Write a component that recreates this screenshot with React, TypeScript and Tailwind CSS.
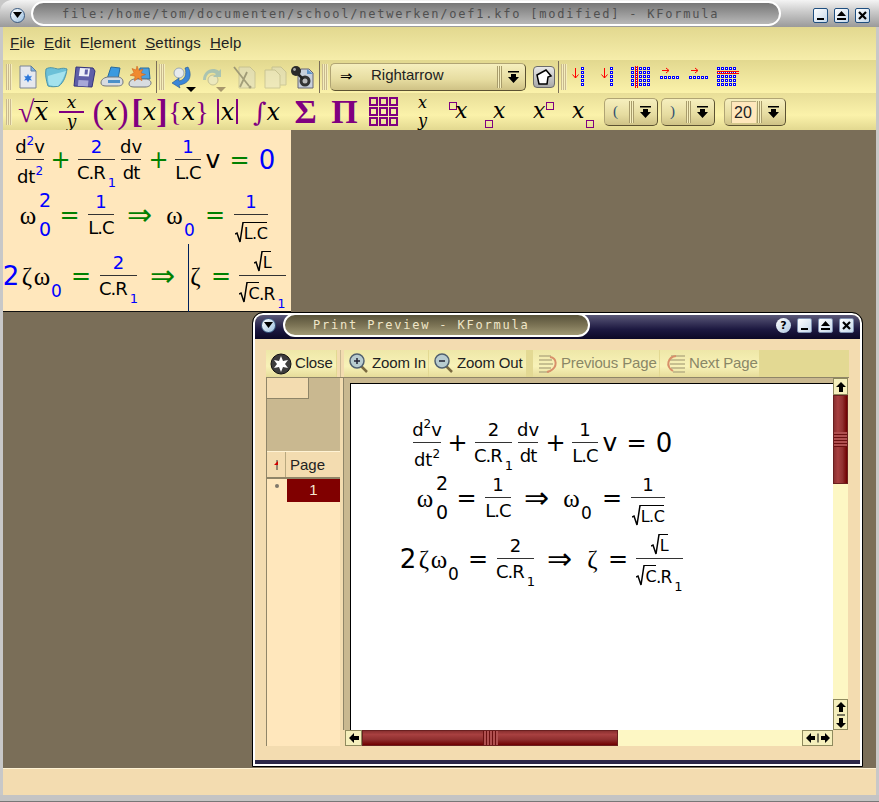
import type { ReactNode } from "react";

const SANS = "font-['DejaVu_Sans',sans-serif]";
const ARIAL = "font-['Liberation_Sans',sans-serif]";

// formula colours change between the editor and the print preview
type Ink = { num: string; op: string; txt: string; sub: string };
const EDIT: Ink = { num: "text-[#0000ff]", op: "text-[#008000]", txt: "text-black", sub: "text-[#0000ff]" };
const PRINT: Ink = { num: "text-black", op: "text-black", txt: "text-black", sub: "text-black" };

function Frac({ top, bottom, cls, tall }: { top: ReactNode; bottom: ReactNode; cls: string; tall?: boolean }) {
  const h = tall ? "h-[28px]" : "h-[26px]";
  return (
    <span className={`inline-flex flex-col items-center shrink-0 ${cls}`}>
      <span className={`${h} flex items-end justify-center leading-none whitespace-nowrap pb-[3px]`}>{top}</span>
      <span className="h-px w-full bg-[#333] shrink-0" />
      <span className={`${h} flex items-start justify-center leading-none whitespace-nowrap pt-[4px] tracking-[-1px]`}>{bottom}</span>
    </span>
  );
}

function Sub({ children, ink }: { children: ReactNode; ink: Ink }) {
  return <span className={`${ink.sub} relative inline-block text-[13px] top-[8px] ml-[3px] tracking-normal leading-none`}>{children}</span>;
}

function Sup({ children, ink }: { children: ReactNode; ink: Ink }) {
  return <span className={`${ink.sub} relative inline-block text-[12px] -top-[8px] leading-none tracking-normal`}>{children}</span>;
}

// zero-digit subscript next to an omega
function Idx({ cls, ink }: { cls: string; ink: Ink }) {
  return <span className={`${ink.sub} ${cls} relative top-[16px] text-[17px] leading-none shrink-0 flex justify-center`}>0</span>;
}

function Root({ children, cls = "text-[16px]" }: { children: ReactNode; cls?: string }) {
  return (
    <span className="inline-flex items-start">
      <svg width="9" height="21" viewBox="0 0 9 21" className="shrink-0">
        <path d="M0 12l2-1 3 9L8 .5h1" stroke="#000" strokeWidth="1.500" fill="none" />
      </svg>
      <span className={`border-t border-black pt-[3px] leading-none tracking-[-.5px] ${cls}`}>{children}</span>
    </span>
  );
}

function Op({ ink, cls, children }: { ink: Ink; cls: string; children: ReactNode }) {
  return <span className={`${ink.op} ${cls} text-[24px] leading-none shrink-0 flex justify-center`}>{children}</span>;
}

function Arrow({ ink, cls }: { ink: Ink; cls: string }) {
  return <span className={`${ink.op} ${cls} w-[25px] text-[30px] leading-none shrink-0 flex justify-center`}>⇒</span>;
}

function Greek({ cls, children }: { cls: string; children: ReactNode }) {
  return <span className={`${cls} font-['Liberation_Serif',serif] text-[25px] leading-none shrink-0 flex justify-center relative top-[1px]`}>{children}</span>;
}

function FormulaRows({ ink, cursor }: { ink: Ink; cursor?: boolean }) {
  return (
    <div className={`flex flex-col text-[18px] ${ink.txt} ${SANS}`}>
      <div className="h-[53px] flex items-center">
        <Frac
          cls="w-[28px] ml-[13px]"
          top={<span>d<Sup ink={ink}>2</Sup>v</span>}
          bottom={<span className="mt-[4px] tracking-normal">dt<Sup ink={ink}>2</Sup></span>}
        />
        <Op ink={ink} cls="w-[17px] ml-[8px]">+</Op>
        <Frac cls="w-[37px] ml-[9px]" top={<span className={ink.num}>2</span>} bottom={<span>C.R<Sub ink={ink}>1</Sub></span>} />
        <Frac cls="w-[20px] ml-[6px]" top="dv" bottom="dt" />
        <Op ink={ink} cls="w-[17px] ml-[9px]">+</Op>
        <Frac cls="w-[26px] ml-[8px]" top={<span className={ink.num}>1</span>} bottom="L.C" />
        <span className="w-[14px] ml-[5px] text-[25px] leading-none shrink-0 flex justify-center">v</span>
        <Op ink={ink} cls="w-[15px] ml-[12px]">=</Op>
        <span className={`${ink.num} w-[14px] ml-[13px] text-[26px] leading-none shrink-0 flex justify-center`}>0</span>
      </div>
      <div className="h-[53px] mt-[2px] flex items-center">
        <Greek cls="w-[14px] ml-[18px]">ω</Greek>
        <span className={`${ink.sub} w-[10px] ml-[5px] h-[48px] flex flex-col items-center justify-between text-[19px] leading-none shrink-0`}>
          <span>2</span>
          <span>0</span>
        </span>
        <Op ink={ink} cls="w-[15px] ml-[12px]">=</Op>
        <Frac cls="w-[26px] ml-[11px]" top={<span className={ink.num}>1</span>} bottom="L.C" />
        <Arrow ink={ink} cls="ml-[13px]" />
        <Greek cls="w-[17px] ml-[14px]">ω</Greek>
        <Idx cls="w-[9px] ml-[2px]" ink={ink} />
        <Op ink={ink} cls="w-[16px] ml-[13px]">=</Op>
        <Frac cls="w-[34px] ml-[11px]" top={<span className={ink.num}>1</span>} bottom={<span className="mt-[3px]"><Root>L.C</Root></span>} />
      </div>
      <div className="h-[57px] mt-[6px] flex items-center relative">
        {cursor && <span className="absolute left-[185px] -top-[3px] h-[68px] w-px bg-[#00205c]" />}
        <span className={`${ink.num} w-[12px] ml-[2px] text-[26px] leading-none shrink-0 flex justify-center`}>2</span>
        <Greek cls="w-[12px] ml-[4px]">ζ</Greek>
        <Greek cls="w-[18px]">ω</Greek>
        <Idx cls="w-[9px] ml-[1px]" ink={ink} />
        <Op ink={ink} cls="w-[16px] ml-[12px]">=</Op>
        <Frac tall cls="w-[37px] ml-[11px]" top={<span className={ink.num}>2</span>} bottom={<span>C.R<Sub ink={ink}>1</Sub></span>} />
        <Arrow ink={ink} cls="ml-[13px]" />
        <Greek cls="w-[13px] ml-[14px]">ζ</Greek>
        <Op ink={ink} cls="w-[16px] ml-[11px]">=</Op>
        <Frac
          tall
          cls="w-[47px] ml-[10px]"
          top={<Root cls="text-[16px]">L</Root>}
          bottom={
            <span className="inline-flex items-start mt-[2px]">
              <Root>C</Root>
              <span className="pt-[4px] text-[17px]">.R<Sub ink={ink}>1</Sub></span>
            </span>
          }
        />
      </div>
    </div>
  );
}

function Grip() {
  return <div className="w-[6px] h-[26px] mx-[2px] shrink-0 bg-[repeating-linear-gradient(90deg,#c9b98f_0,#c9b98f_1px,#f5eebc_1px,#f5eebc_2px)]" />;
}

function Sep() {
  return <div className="w-px h-[32px] bg-[#7a6e58] ml-[2px] shrink-0" />;
}

function Ico({ w, children, dim }: { w: string; children: ReactNode; dim?: boolean }) {
  return (
    <div className={`${w} flex justify-center shrink-0 ${dim ? "opacity-50" : ""}`}>
      <svg width="24" height="24" viewBox="0 0 24 24" className="shrink-0">
        {children}
      </svg>
    </div>
  );
}

function MainIcons() {
  return (
    <>
      <Ico w="w-[28px]">
        <path d="M4 1h11l5 5v17H4z" fill="#e6e8ee" stroke="#7a8496" />
        <path d="M15 1v5h5z" fill="#7fb2e6" stroke="#5f7f9f" />
        <path d="M12 8l1.400 3 3.300-.4-2 2.600 2 2.700-3.300-.4L12 18.500l-1.400-3-3.300.4 2-2.700-2-2.600 3.300.4z" fill="#2f78d8" stroke="#fff" strokeWidth=".6" />
      </Ico>
      <Ico w="w-[28px]">
        <path d="M2 4c5-3 9 0 13 0 3-1 6-1 8 0-1 7-3 13-8 17-4 1-8 1-11 0C2 15 1 9 2 4z" fill="#6cc0d8" stroke="#4d94a8" />
        <path d="M4 11c5-2 12-3 18-5-2 6-4 11-8 15-3 0-6 0-9-1-1-3-1-6-1-9z" fill="#a4e2ee" />
      </Ico>
      <Ico w="w-[28px]">
        <path d="M4 2l17 1 2 3-3 16-18-1z" fill="#5f5fa8" stroke="#34347c" />
        <path d="M8 3l10 .500-1.200 8-10-.500z" fill="#eef0f8" />
        <path d="M13 4.500h3l-.5 5h-3z" fill="#5f5fa8" />
        <path d="M6.500 15l10 .500-.7 6-10-.500z" fill="#a8a8d8" />
      </Ico>
      <Ico w="w-[28px]">
        <path d="M11 2l9 1-2 11H7z" fill="#3c9ae0" stroke="#2a6a9c" />
        <path d="M1 18c0-4 4-6 8-6h8c4 0 6 2 6 5 0 3-2 4-6 4H6c-3 0-5-1-5-3z" fill="#d8dce0" stroke="#70757c" />
        <path d="M8 15h12v3H8z" fill="#4c90c8" />
      </Ico>
      <Ico w="w-[28px]">
        <path d="M12 3h9l1 11H10z" fill="#4aa0e0" stroke="#2a6a9c" />
        <path d="M1 19c0-3 3-5 6-5h10c4 0 6 2 6 4s-2 4-6 4H6c-3 0-5-1-5-3z" fill="#d8dce0" stroke="#70757c" />
        <path d="M9 1l1.800 4.500L15 4l-2 4 4.500 1.500-4.500 1.800 1 4.500-4-2.800-3.500 3 .5-4.800-5-1 4-2.500L4 3.500l4 1.500z" fill="#f08a30" stroke="#c85a18" strokeWidth=".5" />
      </Ico>
    </>
  );
}

function EditIcons() {
  return (
    <>
      <div className="w-[30px] flex justify-center relative shrink-0">
        <svg width="24" height="24" viewBox="0 0 24 24">
          <circle cx="9" cy="8" r="5" fill="#e6eaee" stroke="#9aa8b4" />
          <path d="M18 2c5 9 1 17-9 18l1 3-8-5 7-5 0 3c6-1 8-7 6-13z" fill="#3b86d8" stroke="#21568e" strokeWidth=".6" />
        </svg>
        <span className="absolute left-[19px] top-[22px] w-0 h-0 border-x-[5px] border-x-transparent border-t-[5px] border-t-black" />
      </div>
      <div className="w-[30px] flex justify-center relative shrink-0">
        <svg width="24" height="24" viewBox="0 0 24 24" className="opacity-60">
          <circle cx="13" cy="15" r="5" fill="#e8e8d0" stroke="#a8a88c" />
          <path d="M3 15C3 6 12 1 19 6l2-2v8h-8l3-3C11 6 6 9 6 15z" fill="#7fb0c0" />
        </svg>
        <span className="absolute left-[19px] top-[22px] w-0 h-0 border-x-[5px] border-x-transparent border-t-[5px] border-t-[#a8986c]" />
      </div>
      <Ico w="w-[36px]" dim>
        <path d="M6 2h11l5 5v16H6z" fill="#dcdcc8" stroke="#a8a88c" />
        <path d="M1 2l15 19M14 7L7 22" stroke="#555" strokeWidth="1.800" fill="none" />
        <circle cx="17" cy="22" r="1.500" fill="#555" />
      </Ico>
      <Ico w="w-[24px]" dim>
        <path d="M9 2h9l5 5v13H9z" fill="#dddcc4" stroke="#a8a88c" />
        <path d="M2 5h10l5 5v13H2z" fill="#e8e6d0" stroke="#a8a88c" />
      </Ico>
      <Ico w="w-[30px]">
        <path d="M11 4h8l4 4v15H8V8z" fill="#c8d0dc" stroke="#667" />
        <path d="M17 4v5h6z" fill="#5f94c8" />
        <circle cx="15" cy="16" r="5.500" fill="#333" />
        <circle cx="15" cy="16" r="2.500" fill="#bbb" />
        <path d="M6 7l7 7" stroke="#222" strokeWidth="2.500" />
        <circle cx="6" cy="6" r="5" fill="#2a2a2a" />
        <circle cx="4.500" cy="4.500" r="1.400" fill="#aaa" />
      </Ico>
    </>
  );
}

function DropArrow() {
  return (
    <svg width="11" height="12" viewBox="0 0 11 12" className="shrink-0">
      <rect x="0" y="0" width="11" height="1.500" fill="#000" />
      <path d="M3 3h5v3h3l-5.500 6L0 6h3z" fill="#000" />
    </svg>
  );
}

function Combo({ w, children }: { w: string; children: ReactNode }) {
  return (
    <div className={`${w} h-[28px] flex items-center rounded-[5px] border border-[#b0a474] border-b-[#5c5232] border-r-[#5c5232] bg-[linear-gradient(#f6efbe,#e6dca0_60%,#cfc286)] shrink-0`}>
      <div className="flex-1 min-w-0 flex items-center">{children}</div>
      <div className="w-[5px] h-[22px] bg-[repeating-linear-gradient(90deg,#a89c6c_0,#a89c6c_1px,#f6efbe_1px,#f6efbe_2px)]" />
      <div className="w-[23px] flex justify-center"><DropArrow /></div>
    </div>
  );
}

// blue matrix square: 3px outline with a white centre
function cell(x: number, y: number) {
  return (
    <g key={`${x}-${y}`}>
      <rect x={x} y={y} width="3" height="3" fill="#0000ff" />
      <rect x={x + 1} y={y + 1} width="1" height="1" fill="#ffffff" />
    </g>
  );
}

function RowArrow({ cls = "" }: { cls?: string }) {
  return (
    <svg width="29" height="22" viewBox="0 0 29 22" className={`block shrink-0 ${cls}`}>
      <path d="M9.500 2v10M6.500 8.500L9.500 12l3-3.500" stroke="#ff0000" fill="none" />
      {[0, 1, 2, 3, 4].map((i) => cell(15, 1 + i * 4))}
    </svg>
  );
}

function ColArrow({ x }: { x: number }) {
  return (
    <svg width="29" height="22" viewBox="0 0 29 22" className="block shrink-0">
      <path d={`M${x + 2} 4.500h7M${x + 6} 2l3 2.500-3 2.500`} stroke="#ff0000" fill="none" />
      {[0, 1, 2, 3, 4].map((i) => cell(x + i * 4, 10))}
    </svg>
  );
}

function DotGrid({ x, vertical }: { x: number; vertical?: boolean }) {
  const rows = [0, 1, 2, 3, 4];
  return (
    <svg width="29" height="22" viewBox="0 0 29 22" className="block shrink-0">
      {rows.map((r) => rows.map((c) => cell(x + c * 4, 1 + r * 4)))}
      {vertical ? (
        <path d={`M${x + 4.5} 0v22M${x + 6.5} 0v22`} stroke="#ff0000" fill="none" />
      ) : (
        <path d={`M${x} 5.5h22M${x} 7.5h22`} stroke="#ff0000" fill="none" />
      )}
    </svg>
  );
}

function MathX() {
  return <span className="italic text-black">x</span>;
}

function Paren({ children, cls = "text-[34px]" }: { children: ReactNode; cls?: string }) {
  return <span className={`text-[#800080] leading-none font-['Liberation_Serif',serif] ${cls}`}>{children}</span>;
}

function MathCell({ children, w = "w-[39px]" }: { children: ReactNode; w?: string }) {
  return <div className={`${w} h-[32px] flex items-center justify-center font-['DejaVu_Serif',serif] text-[24px] leading-none shrink-0`}>{children}</div>;
}

function ScriptCell({ w, box, boxY, tx }: { w: number; box: number; boxY: number; tx: number }) {
  return (
    <svg width={w} height="32" viewBox={`0 0 ${w} 32`} className="shrink-0">
      <rect x={box + 0.5} y={boxY + 0.5} width="7" height="7" fill="none" stroke="#800080" />
      <text x={tx} y="22" fontFamily="DejaVu Serif" fontStyle="italic" fontSize="22" fill="#000">x</text>
    </svg>
  );
}

function FormulaBar() {
  return (
    <div className="h-[37px] flex items-center pl-[1px]">
      <Grip />
      <MathCell w="w-[38px]">
        <Paren cls="text-[30px]">√</Paren>
        <span className="border-t border-black leading-[20px]"><MathX /></span>
      </MathCell>
      <MathCell>
        <span className="flex flex-col items-center w-[25px] text-[17px] leading-[17px]">
          <MathX />
          <span className="h-[2px] w-full bg-[#800080]" />
          <span className="italic text-black">y</span>
        </span>
      </MathCell>
      <MathCell><Paren>(</Paren><MathX /><Paren>)</Paren></MathCell>
      <MathCell><Paren cls="text-[34px] font-bold">[</Paren><MathX /><Paren cls="text-[34px] font-bold">]</Paren></MathCell>
      <MathCell><Paren cls="text-[28px]">{"{"}</Paren><MathX /><Paren cls="text-[28px]">{"}"}</Paren></MathCell>
      <MathCell>
        <span className="w-[2px] h-[25px] bg-[#800080] mr-[2px]" />
        <MathX />
        <span className="w-[2px] h-[25px] bg-[#800080] ml-[2px]" />
      </MathCell>
      <MathCell><span className="italic text-[#800080] text-[26px]">∫</span><MathX /></MathCell>
      <MathCell><Paren cls="text-[34px] font-bold">Σ</Paren></MathCell>
      <MathCell><Paren cls="text-[34px] font-bold">Π</Paren></MathCell>
      <MathCell>
        <svg width="29" height="29" viewBox="0 0 29 29">
          {[1, 11, 21].map((y) => [1, 11, 21].map((x) => (
            <rect key={`${x}-${y}`} x={x} y={y} width="7" height="7" fill="none" stroke="#800080" strokeWidth="2" />
          )))}
        </svg>
      </MathCell>
      <MathCell>
        <span className="flex flex-col items-center text-[16px] leading-[18px]"><MathX /><span className="italic text-black">y</span></span>
      </MathCell>
      <ScriptCell w={38} box={7} boxY={6} tx={13} />
      <ScriptCell w={40} box={5} boxY={24} tx={13} />
      <ScriptCell w={40} box={26} boxY={6} tx={13} />
      <ScriptCell w={40} box={26} boxY={24} tx={12} />
      <div className="flex items-center gap-[3px] ml-[4px]">
        <Combo w="w-[54px]"><span className="pl-[8px] text-[#305070] font-['Liberation_Serif',serif] text-[15px]">(</span></Combo>
        <Combo w="w-[54px]"><span className="pl-[8px] text-[#305070] font-['Liberation_Serif',serif] text-[15px]">)</span></Combo>
        <div className="w-[3px]" />
        <Combo w="w-[62px]">
          <span className={`ml-[6px] w-[25px] h-[22px] bg-[#ffe7bc] border-t border-l border-[#b8ac80] text-[16px] leading-[22px] pl-[2px] text-[#222] ${ARIAL}`}>20</span>
        </Combo>
      </div>
    </div>
  );
}

function WinButton({ kind, dark }: { kind: "min" | "max" | "close"; dark?: boolean }) {
  return (
    <div className={`w-[15px] h-[15px] rounded-[2px] border ${dark ? "border-[#8090b0]" : "border-[#1f4f80]"} bg-[linear-gradient(135deg,#ffffff,#c6d8ea)] flex items-center justify-center shrink-0`}>
      <svg width="11" height="11" viewBox="0 0 11 11">
        {kind === "min" && <rect x="2" y="8" width="7" height="2" fill="#000" />}
        {kind === "max" && <path d="M5.500 1L10 6H1zM1 8h9v2H1z" fill="#000" />}
        {kind === "close" && <path d="M2 2l7 7M9 2l-7 7" stroke="#000" strokeWidth="2.200" />}
      </svg>
    </div>
  );
}

function MenuBall() {
  return (
    <div className="w-[15px] h-[15px] rounded-full bg-[linear-gradient(135deg,#ffffff,#9cc0e0)] border border-[#3a5a80] flex items-center justify-center shrink-0">
      <svg width="9" height="6" viewBox="0 0 9 6"><path d="M0 0h9L4.500 6z" fill="#000" /></svg>
    </div>
  );
}

function TitleBar() {
  return (
    <div className="h-[27px] shrink-0 flex items-center bg-[linear-gradient(#f4f4f4,#c9c9c9_45%,#9a9a9a)] rounded-tl-[12px]">
      <div className="w-[31px] flex justify-center pl-[3px] pt-[3px]"><MenuBall /></div>
      <div className="w-[750px] h-[25px] rounded-full border-2 border-white bg-[linear-gradient(#777777,#9b9b9b_55%,#b8b8b8)] flex items-center pl-[29px] pt-[1px] font-['DejaVu_Sans_Mono',monospace] text-[12px] tracking-[1.78px] text-[#505050] whitespace-nowrap overflow-hidden">
        file:/home/tom/documenten/school/netwerken/oef1.kfo [modified] - KFormula
      </div>
      <div className="flex-1" />
      <div className="flex gap-[6px] pr-[9px] pt-[3px]">
        <WinButton kind="min" />
        <WinButton kind="max" />
        <WinButton kind="close" />
      </div>
    </div>
  );
}

function PreviewTool({ children, icon, off, w, gap = "gap-[4px]" }: { children: ReactNode; icon: ReactNode; off?: boolean; w: string; gap?: string }) {
  return (
    <div className={`${w} ${gap} h-full flex items-center pl-[5px] border-r border-[#e3d993] bg-[linear-gradient(#eee7a8,#f8f2b8_60%,#e6dc9a)] text-[15px] tracking-[-0.15px] whitespace-nowrap shrink-0 ${ARIAL} ${off ? "text-[#8a8766]" : "text-[#222]"}`}>
      {icon}
      {children}
    </div>
  );
}

function Lens({ sign }: { sign: string }) {
  return (
    <svg width="19" height="21" viewBox="0 0 19 21" className="shrink-0">
      <path d="M12 13l6 6" stroke="#7a6a40" strokeWidth="2.500" />
      <circle cx="8" cy="8" r="7" fill="#b8ccd0" stroke="#506070" strokeWidth="1.500" />
      <path d={sign === "+" ? "M5 8h6M8 5v6" : "M5 8h6"} stroke="#223" strokeWidth="1.500" />
    </svg>
  );
}

function Thumb({ horizontal }: { horizontal?: boolean }) {
  return horizontal ? (
    <div className="w-full h-full flex bg-[linear-gradient(#8a3030,#a84040_25%,#903030_60%,#700000)] border border-[#6a2020] justify-center">
      <div className="w-[15px] h-full bg-[repeating-linear-gradient(90deg,#6a1010_0,#6a1010_1px,#b05050_1px,#b05050_3px)]" />
    </div>
  ) : (
    <div className="h-full flex flex-col bg-[linear-gradient(90deg,#8a3030,#a84040_30%,#903030_65%,#700000)] border border-[#6a2020] justify-center">
      <div className="h-[15px] w-full bg-[repeating-linear-gradient(0deg,#6a1010_0,#6a1010_1px,#b05050_1px,#b05050_3px)]" />
    </div>
  );
}

function ArrowBtn({ d, cls }: { d: string; cls: string }) {
  return (
    <div className={`${cls} bg-[#f5efbc] border border-[#8f8a5e] flex items-center justify-center shrink-0`}>
      <svg width="12" height="12" viewBox="0 0 12 12"><path d={d} fill="#000" /></svg>
    </div>
  );
}

const UP = "M6 1l5 5H8v5H4V6H1z";
const LEFT = "M1 6l5-5v3h5v4H6v3z";

function PrintPreview() {
  return (
    <div className={`absolute left-[253px] top-[313px] w-[609px] h-[453px] flex flex-col border-2 border-white outline outline-1 outline-black rounded-t-[10px] overflow-hidden bg-[#f3dcb0] ${SANS}`}>
      <div className="h-[24px] pb-[4px] shrink-0 flex items-center bg-[linear-gradient(#5a5878,#1c1840_60%,#0c0826)]">
        <div className="w-[28px] pr-[1px] flex justify-center"><MenuBall /></div>
        <div className="w-[307px] h-[24px] rounded-full border-2 border-white bg-[linear-gradient(#57523a,#7a7254_50%,#a09874)] flex items-center pl-[28px] font-['DejaVu_Sans_Mono',monospace] text-[12px] tracking-[1.8px] text-[#f0e6c8] whitespace-nowrap">
          Print Preview - KFormula
        </div>
        <div className="flex-1" />
        <div className="flex gap-[6px] pr-[6px]">
          <div className="w-[15px] h-[15px] rounded-full bg-[linear-gradient(135deg,#ffffff,#b0c8e0)] flex items-center justify-center text-[11px] font-bold text-black leading-none">?</div>
          <WinButton kind="min" dark />
          <WinButton kind="max" dark />
          <WinButton kind="close" dark />
        </div>
      </div>
      <div className="flex-1 flex flex-col px-[11px] pt-[11px] min-h-0">
        {/* toolbar */}
        <div className="h-[28px] shrink-0 flex items-center bg-[#e3d993] border-b border-[#8f8568]">
          <PreviewTool
            w="w-[71px]"
            gap="gap-[3px]"
            icon={
              <svg width="22" height="22" viewBox="0 0 22 22" className="shrink-0 -ml-[1px]">
                <circle cx="11" cy="11" r="10" fill="#3c3c3c" stroke="#111" />
                <path d="M11 3l2 5 5-1-3 4 3 4-5-1-2 5-2-5-5 1 3-4-3-4 5 1z" fill="#fff" />
              </svg>
            }
          >
            Close
          </PreviewTool>
          <div className="w-[7px] h-full bg-[#f3dcb0] shrink-0 flex justify-center">
            <div className="w-px h-full bg-[#c9b890]" />
          </div>
          <PreviewTool w="w-[85px]" icon={<Lens sign="+" />}>Zoom In</PreviewTool>
          <PreviewTool w="w-[98px]" icon={<Lens sign="-" />}>Zoom Out</PreviewTool>
          <div className="w-[6px] shrink-0" />
          <PreviewTool
            w="w-[127px]"
            off
            gap="gap-[3px]"
            icon={
              <svg width="20" height="20" viewBox="0 0 20 20" className="shrink-0">
                <path d="M1 2h12M1 6h13M1 10h14M1 14h12M1 18h10" stroke="#b8b084" strokeWidth="1.500" />
                <path d="M12 3c7 1 8 10 0 14l-3 1" stroke="#d8906a" strokeWidth="2" fill="none" />
              </svg>
            }
          >
            Previous Page
          </PreviewTool>
          <PreviewTool
            w="w-[100px]"
            off
            gap="gap-[3px]"
            icon={
              <svg width="21" height="20" viewBox="0 0 21 20" className="shrink-0">
                <path d="M6 2h14M5 6h15M5 10h15M6 14h14M8 18h12" stroke="#b8b084" strokeWidth="1.500" />
                <path d="M11 2C3 3 0 12 8 17" stroke="#d8906a" strokeWidth="2" fill="none" />
              </svg>
            }
          >
            Next Page
          </PreviewTool>
        </div>
        <div className="flex-1 flex min-h-0 mb-[14px]">
          {/* pages table */}
          <div className={`w-[74px] shrink-0 flex flex-col border-l border-[#8f8568] bg-[#ffe7bc] ${ARIAL}`}>
            <div className="h-[73px] bg-[#c9b890] shrink-0">
              <div className="w-[42px] h-[21px] bg-[#f3dcb0] border-r border-b border-[#8f8568]" />
            </div>
            <div className="h-[28px] flex shrink-0 bg-[#f3dcb0] border-t border-[#fff3d4] border-b-2 border-b-[#8f8568] text-[15px] text-[#222]">
              <div className="w-[19px] border-r border-[#b9a980] flex items-center justify-center">
                <svg width="7" height="12" viewBox="0 0 7 12"><path d="M4 1v10" stroke="#333" /><path d="M5 2L1 6h4z" fill="#d00000" /></svg>
              </div>
              <div className="flex-1 pl-[4px] leading-[26px]">Page</div>
            </div>
            <div className="h-[23px] flex shrink-0">
              <div className="w-[20px] flex justify-center pt-[5px]">
                <div className="w-[4px] h-[4px] rounded-full bg-[#80786a]" />
              </div>
              <div className="flex-1 bg-[#800000] text-[#f5e8d0] text-[15px] text-center leading-[22px]">1</div>
            </div>
          </div>
          <div className="w-[3px] shrink-0 bg-[#f3dcb0]" />
          {/* page view */}
          <div className="flex-1 min-w-0 flex flex-col">
            <div className="flex-1 min-h-0 flex mr-[1px]">
              <div className="flex-1 min-w-0 flex flex-col bg-[#c9b890] pl-[6px] pt-[5px] border-l border-[#8f8568]">
                <div className="flex-1 min-h-0 border-t border-l border-black bg-white pl-[49px] pt-[32px]">
                  <FormulaRows ink={PRINT} />
                </div>
              </div>
              <div className="w-[15px] shrink-0 flex flex-col bg-[#fdf7c4]">
                <ArrowBtn d={UP} cls="h-[17px]" />
                <div className="h-[89px] shrink-0"><Thumb /></div>
                <div className="flex-1" />
                <div className="h-[31px] shrink-0 bg-[#f5efbc] border border-[#8f8a5e] flex flex-col items-center justify-center">
                  <svg width="12" height="28" viewBox="0 0 12 28"><path d="M6 1l5 5H8v5H4V6H1zM6 27l5-5H8v-5H4v5H1z M2 13.500h8v1H2z" fill="#000" /></svg>
                </div>
              </div>
            </div>
            <div className="h-[16px] shrink-0 flex pl-[2px] pr-[1px]">
              <ArrowBtn d={LEFT} cls="w-[17px]" />
              <div className="w-[256px] h-full shrink-0"><Thumb horizontal /></div>
              <div className="flex-1 bg-[#fdf7c4]" />
              <div className="w-[31px] shrink-0 bg-[#f5efbc] border border-[#8f8a5e] flex items-center justify-center">
                <svg width="26" height="12" viewBox="0 0 26 12"><path d="M1 6l5-5v3h4v4H6v3zM25 6l-5-5v3h-4v4h4v3zM12.500 1.500h1v9h-1z" fill="#000" /></svg>
              </div>
              <div className="w-[15px] shrink-0" />
            </div>
          </div>
        </div>
      </div>
      <div className="h-[4px] shrink-0 bg-[#2c2848]" />
    </div>
  );
}

export default function App() {
  return (
    <div className={`w-[879px] h-[802px] relative overflow-hidden bg-[#c8c8c8] flex flex-col ${SANS}`}>
      <TitleBar />
      <div className="flex-1 min-h-0 flex flex-col mx-[3px]">
        <div className={`h-[33px] shrink-0 flex items-center pl-[7px] gap-[9px] text-[15px] text-[#222] tracking-[0.2px] bg-[linear-gradient(#e2d88f,#f6edaa)] ${ARIAL}`}>
          <span><u>F</u>ile</span>
          <span><u>E</u>dit</span>
          <span>E<u>l</u>ement</span>
          <span><u>S</u>ettings</span>
          <span><u>H</u>elp</span>
        </div>
        <div className="h-[33px] shrink-0 flex items-center pl-[1px] bg-[linear-gradient(#e2d88f,#fbf2aa)]">
          <Grip />
          <MainIcons />
          <Sep />
          <Grip />
          <EditIcons />
          <Sep />
          <Grip />
          <Combo w="w-[196px]">
            <span className="pl-[9px] w-[40px] text-[15px] leading-none">⇒</span>
            <span className={`text-[15px] text-[#222] pb-[3px] ${ARIAL}`}>Rightarrow</span>
          </Combo>
          <div className="w-[7px] shrink-0" />
          <div className="w-[22px] h-[22px] shrink-0 rounded-[4px] border border-[#6b6b6b] bg-[linear-gradient(#e8e8e8,#a8a8a8)] flex items-center justify-center">
            <svg width="18" height="18" viewBox="0 0 18 18"><path d="M2 7l9-5 5 6-3 1-1 7H4z" fill="#fff" stroke="#000" strokeWidth="1.500" /></svg>
          </div>
          <div className="w-px h-[32px] bg-[#7a6e58] ml-[3px] shrink-0" />
          <Grip />
          <RowArrow cls="-ml-[3px]" />
          <RowArrow />
          <DotGrid x={7} vertical />
          <ColArrow x={7} />
          <ColArrow x={7} />
          <DotGrid x={6} />
        </div>
        <div className="shrink-0 bg-[linear-gradient(#e8de98,#fbf2aa_60%,#e2d890)]">
          <FormulaBar />
        </div>
        <div className="flex-1 min-h-0 bg-[#7a6e58] flex flex-col items-start">
          <div className="w-[288px] h-[182px] pt-[3px] bg-[#ffe7bc] border-b border-[#111] shrink-0">
            <FormulaRows ink={EDIT} cursor />
          </div>
        </div>
        <div className="h-[27px] shrink-0 bg-[#f3dcb0] border-t border-[#fff3d4]" />
      </div>
      <div className="h-[7px] shrink-0 bg-[#c4c4c4] border-b border-[#777]" />
      <PrintPreview />
    </div>
  );
}
